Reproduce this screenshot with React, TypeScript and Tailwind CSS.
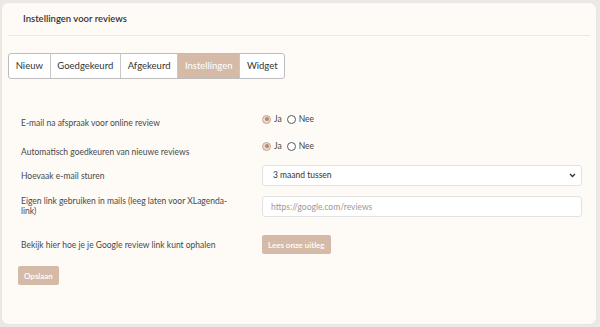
import React from "react";

const tabs = ["Nieuw", "Goedgekeurd", "Afgekeurd", "Instellingen", "Widget"];

function Radio({ checked }: { checked?: boolean }) {
  if (checked) {
    return (
      <span className="flex h-[9px] w-[9px] items-center justify-center rounded-full border border-[#c9a78e] bg-[#ead9cc]">
        <span className="h-[4px] w-[4px] rounded-full bg-[#b58a6c]" />
      </span>
    );
  }
  return <span className="h-[9px] w-[9px] rounded-full border border-[#5a5a5a] bg-white" />;
}

function YesNo() {
  return (
    <div className="flex items-center gap-[3px] text-[8.5px] leading-[12px] text-[#444]">
      <Radio checked />
      <span className="mr-[2px]">Ja</span>
      <Radio />
      <span>Nee</span>
    </div>
  );
}

export default function App() {
  return (
    <div
      className="h-[327px] w-[600px] bg-[#ebe8e5] pl-[2px] pr-[4px] pt-[3px] pb-[3px]"
      style={{ fontFamily: "Lato, 'Open Sans', sans-serif" }}
    >
      <div className="h-full w-full rounded-[6px] bg-[#fefbf7] px-[6px] shadow-[0_0_1px_rgba(0,0,0,0.08)]">
        {/* header */}
        <div className="flex h-[33px] items-center border-b border-[#e7e9eb] pl-[15px]">
          <h2 className="text-[9.5px] font-semibold text-[#333]">Instellingen voor reviews</h2>
        </div>

        {/* tabs */}
        <div className="mt-[17px] flex h-[26px] w-max overflow-hidden rounded-[3px] border border-[#bdbdbd] bg-white">
          {tabs.map((t, i) => (
            <div
              key={t}
              className={
                "flex items-center px-[6.7px] text-[9.5px] " +
                (i > 0 ? "border-l border-[#c8c8c8] " : "") +
                (t === "Instellingen" ? "bg-[#d5bba7] text-white" : "text-[#333]")
              }
            >
              {t}
            </div>
          ))}
        </div>

        {/* form */}
        <div className="mt-[32px] pl-[10px] text-[8.5px] text-[#484848]">
          <div className="flex h-[26px] items-start">
            <div className="ml-[3px] mt-[6px] w-[241px] leading-[12px]">E-mail na afspraak voor online review</div>
            <div className="mt-[2px]">
              <YesNo />
            </div>
          </div>

          <div className="flex h-[28px] items-start">
            <div className="ml-[3px] mt-[9px] w-[241px] leading-[12px]">Automatisch goedkeuren van nieuwe reviews</div>
            <div className="mt-[3px]">
              <YesNo />
            </div>
          </div>

          <div className="flex items-start">
            <div className="ml-[3px] mt-[5px] w-[241px] leading-[12px]">Hoevaak e-mail sturen</div>
            <div className="flex h-[21px] w-[320px] items-center justify-between rounded-[3px] border border-[#e2e2e2] bg-white pl-[10px] pr-[5px] text-[#333]">
              <span>3 maand tussen</span>
              <svg width="7" height="5" viewBox="0 0 7 5" fill="none">
                <path d="M1 1l2.5 2.5L6 1" stroke="#333" strokeWidth="1.3" />
              </svg>
            </div>
          </div>

          <div className="mt-[10px] flex items-start">
            <div className="ml-[3px] w-[241px] pr-[30px] leading-[10px]">
              Eigen link gebruiken in mails (leeg laten voor XLagenda-link)
            </div>
            <input
              className="h-[21px] w-[320px] rounded-[3px] border border-[#e2e2e2] bg-white pl-[8px] text-[8.5px] outline-none placeholder:text-[#9a9a9a]"
              placeholder="https://google.com/reviews"
            />
          </div>

          <div className="mt-[18px] flex items-start">
            <div className="ml-[3px] mt-[4px] w-[241px] leading-[12px]">Bekijk hier hoe je je Google review link kunt ophalen</div>
            <button className="flex h-[19px] items-center rounded-[2px] bg-[#d5bba7] px-[6px] text-[8px] font-semibold text-white">
              Lees onze uitleg
            </button>
          </div>

          <button className="mt-[12px] flex h-[19px] items-center rounded-[2px] bg-[#d5bba7] px-[6px] text-[8px] font-semibold text-white">
            Opslaan
          </button>
        </div>
      </div>
    </div>
  );
}
